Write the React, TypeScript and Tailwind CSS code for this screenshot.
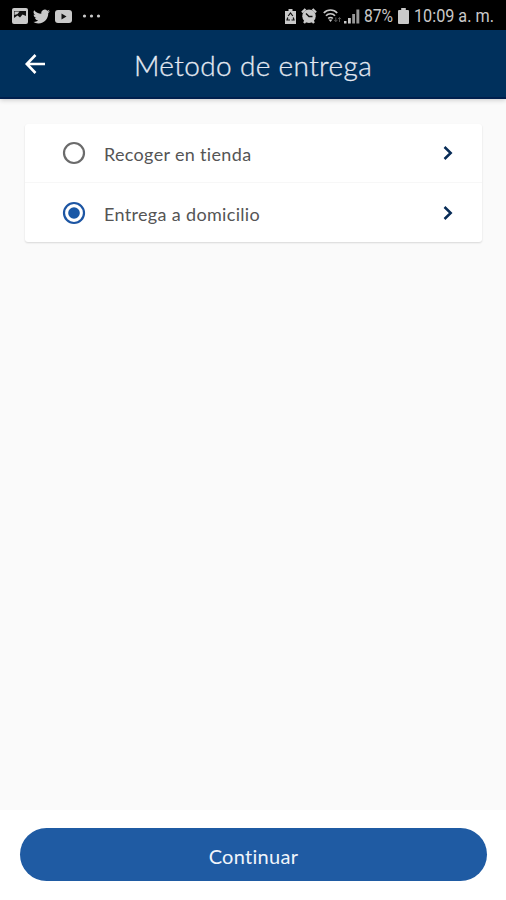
import React, { useState } from 'react';

const StatusBar: React.FC = () => (
  <div className="flex h-[30px] shrink-0 items-center bg-black pt-[2px] pl-[12px] font-['Roboto',sans-serif] text-[#c9c9c9]">
    <svg className="h-4 w-4" viewBox="0 0 16 16">
      <rect width="16" height="16" rx="2" fill="currentColor" />
      <path d="M2 3h12v5l-3.500-1.500L8 9.500 5.500 7.500 2 10z" fill="#111" />
      <path d="M2.500 3.500h5l-2 2.500-3 1z" fill="currentColor" />
    </svg>
    <svg className="ml-[5px] h-[17px] w-[17px]" viewBox="0 0 24 24" fill="currentColor">
      <path d="M23.95 4.57a10 10 0 0 1-2.82.77 4.96 4.96 0 0 0 2.16-2.72c-.95.55-2 .95-3.13 1.18a4.92 4.92 0 0 0-8.38 4.48C7.69 8.1 4.07 6.13 1.64 3.16a4.92 4.92 0 0 0 1.52 6.57 4.9 4.9 0 0 1-2.23-.61v.06a4.92 4.92 0 0 0 3.95 4.83 5 5 0 0 1-2.21.08 4.94 4.94 0 0 0 4.6 3.42A9.87 9.87 0 0 1 0 19.54a13.99 13.99 0 0 0 7.55 2.21c9.05 0 14-7.5 14-13.98 0-.21 0-.42-.02-.63a9.94 9.94 0 0 0 2.42-2.57z" />
    </svg>
    <svg className="ml-[5px] h-[13px] w-[17px]" viewBox="0 0 17 13">
      <rect width="17" height="13" rx="3" fill="currentColor" />
      <path d="M6.5 3.5v6l5-3z" fill="#111" />
    </svg>
    <svg className="ml-[10px] h-[4px] w-[20px]" viewBox="0 0 20 4" fill="currentColor">
      <circle cx="2.5" cy="2" r="1.6" />
      <circle cx="9.5" cy="2" r="1.6" />
      <circle cx="16.5" cy="2" r="1.6" />
    </svg>

    <div className="ml-auto flex items-center">
      <svg className="h-[15px] w-[11px]" viewBox="0 0 11 15">
        <path d="M3.5 0h4v2H11v13H0V2h3.5z" fill="currentColor" />
        <path d="M3.2 7 5.5 4l2.3 3M2.8 8.5 2 11h3M8.2 8.5 9 11H6.5" fill="none" stroke="#111" strokeWidth="1.2" />
      </svg>
      <svg className="ml-[5px] h-4 w-4" viewBox="0 0 16 16">
        <path d="M1 4.5 4.5 1M15 4.5 11.5 1M3 15l2-2.5M13 15l-2-2.5" stroke="currentColor" strokeWidth="2.4" />
        <circle cx="8" cy="8.2" r="6.7" fill="currentColor" />
        <path d="M5 5.5l3 3h3.5" fill="none" stroke="#111" strokeWidth="1.4" />
      </svg>
      <svg className="ml-[6px] h-4 w-[19px]" viewBox="0 0 19 16" fill="none" stroke="currentColor">
        <path d="M.8 5a9 9 0 0 1 13.4 0M3 7.800a6 6 0 0 1 9 0M5.200 10.500a3.200 3.200 0 0 1 4.600 0" strokeWidth="1.7" />
        <path d="M5.500 11.500 7.500 14l2-2.500z" fill="currentColor" stroke="none" />
        <path d="M12.8 9.5v4M11.3 12l1.5 1.7 1.5-1.7M16.5 14v-4.5M15 11.2l1.5-1.7 1.5 1.7" stroke="#555" />
      </svg>
      <svg className="ml-[2px] h-[15px] w-[16px]" viewBox="0 0 16 15" fill="currentColor">
        <path d="M0 12h2.500v2.500H0zM4 9h2.800v5.500H4z" />
        <path d="M8.200 5H11v9.500H8.200zM12.400.5h2.900v14h-2.900z" opacity=".75" />
      </svg>
      <div className="ml-[4px] w-[34px]">
        <span className="inline-block origin-left translate-y-px scale-x-[0.87] text-[18px] leading-[20px] whitespace-nowrap">87%</span>
      </div>
      <svg className="h-[16px] w-[11px]" viewBox="0 0 11 16" fill="currentColor">
        <path d="M3.2 0h4.600v2H10a1 1 0 0 1 1 1v12a1 1 0 0 1-1 1H1a1 1 0 0 1-1-1V3a1 1 0 0 1 1-1h2.200z" />
      </svg>
      <div className="ml-[5px] w-[92px]">
        <span className="inline-block origin-left translate-y-px scale-x-[0.9] text-[18px] leading-[20px] whitespace-nowrap">10:09 a. m.</span>
      </div>
    </div>
  </div>
);

const Header: React.FC = () => (
  <header className="relative z-10 flex h-[69px] shrink-0 items-center border-b-2 border-[#001f4d] bg-[#00305c] shadow-[0_1px_5px_rgba(0,0,0,0.2)]">
    <button aria-label="Volver" className="ml-[24px] pt-px text-white">
      <svg className="h-[22px] w-[22px]" viewBox="0 0 22 22" fill="none" stroke="currentColor" strokeWidth="2.6">
        <path d="M11.500 2 2.800 11l8.700 9M3 11h18" />
      </svg>
    </button>
    <h1 className="ml-[88px] pt-[3px] text-[28px] leading-[34px] font-light tracking-[0.36px] whitespace-nowrap text-[#e4e9f2] [-webkit-text-stroke:0.3px]">
      Método de entrega
    </h1>
  </header>
);

interface OptionProps {
  label: string;
  checked: boolean;
  onSelect: () => void;
}

const DeliveryOption: React.FC<OptionProps> = ({ label, checked, onSelect }) => (
  <button role="radio" aria-checked={checked} onClick={onSelect} className="flex h-[59px] w-full items-center pl-[37px] text-left">
    <svg className="h-6 w-6" viewBox="0 0 24 24">
      <circle cx="12" cy="12" r="10" fill="none" stroke={checked ? '#1c55a3' : '#6b6b6b'} strokeWidth="2.2" />
      {checked && <circle cx="12" cy="12" r="5.800" fill="#1857a6" />}
    </svg>
    <span className="ml-[18px] pt-[2px] text-[18px] leading-6 tracking-[0.33px] whitespace-nowrap text-[#555]">{label}</span>
    <svg className="mr-[28px] ml-auto h-[14px] w-[12px]" viewBox="0 0 12 14" fill="none" stroke="#082c57" strokeWidth="2.5">
      <path d="M2.500 1 8.700 7l-6.200 6" />
    </svg>
  </button>
);

const OPTIONS = ['Recoger en tienda', 'Entrega a domicilio'];

export default function App() {
  const [selected, setSelected] = useState(1);

  return (
    <div className="flex h-[900px] w-full flex-col overflow-hidden bg-[#fafafa] font-['Lato',sans-serif]">
      <StatusBar />
      <Header />
      <main className="grow px-[25px] pt-[25px]">
        <div role="radiogroup" className="mr-[-1px] divide-y divide-[#f7f7f7] rounded-[3px] bg-white shadow-[0_1px_2px_rgba(0,0,0,0.14)]">
          {OPTIONS.map((label, i) => (
            <DeliveryOption key={label} label={label} checked={selected === i} onSelect={() => setSelected(i)} />
          ))}
        </div>
      </main>
      <footer className="h-[90px] shrink-0 bg-white pt-[18px] pr-[19px] pl-[20px]">
        <button className="h-[53px] w-full rounded-full bg-[#1f5ba3] pt-[2px] text-[20px] tracking-[0.3px] text-[#f0f5fb]">
          Continuar
        </button>
      </footer>
    </div>
  );
}
